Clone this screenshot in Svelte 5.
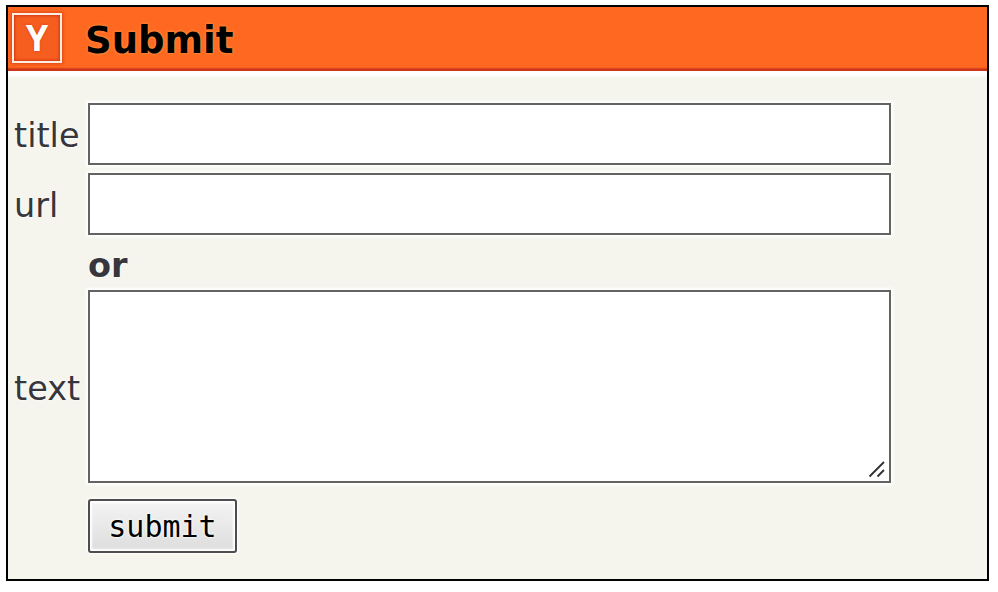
<script>
  let title = $state('');
  let url = $state('');
  let text = $state('');
</script>

<main>
  <header>
    <div class="logo">Y</div>
    <h1>Submit</h1>
  </header>
  <form onsubmit={(e) => e.preventDefault()}>
    <div class="row field">
      <label for="title">title</label>
      <input id="title" bind:value={title} />
    </div>
    <div class="row field">
      <label for="url">url</label>
      <input id="url" bind:value={url} />
    </div>
    <div class="row or"><span></span><b>or</b></div>
    <div class="row area">
      <label for="text">text</label>
      <div class="box">
        <textarea id="text" bind:value={text}></textarea>
        <svg class="grip" width="18" height="17" viewBox="0 0 18 17">
          <path d="M1.5 15.5L16 1M9.5 15.5L16 9" stroke="#303030" stroke-width="1.8" fill="none" />
        </svg>
      </div>
    </div>
    <div class="row"><span></span><button>submit</button></div>
  </form>
</main>

<style>
  :global(body) { background: #fff; }
  main {
    box-sizing: border-box;
    width: 983px;
    height: 576px;
    margin: 5px 0 0 6px;
    border: 2px solid #000;
    background: #f5f5ed;
    font-family: "DejaVu Sans", Verdana, sans-serif;
    overflow: hidden;
  }
  header {
    box-sizing: border-box;
    height: 64px;
    display: flex;
    align-items: flex-start;
    padding: 6px 0 0 4px;
    background: linear-gradient(#ff6820 0 60px, #ef5820 61px, #c93418 62px, #cf3818 64px);
  }
  .logo {
    box-sizing: border-box;
    width: 50px;
    height: 50px;
    border: 2px solid #ffece2;
    box-shadow: inset 0 0 3px 1px #cf3c14, 0 0 3px 1px #dc4818;
    background: #f65e20;
    color: #fff;
    font: bold 36px/46px "Open Sans", sans-serif;
    text-align: center;
    text-shadow: 0 0 3px #d84010;
  }
  h1 {
    margin: 6px 0 0 23px;
    font-size: 37px;
    line-height: 44px;
    font-weight: bold;
    color: #000;
    text-shadow: 0 0 3px #ffa94f;
  }
  form {
    padding: 32px 0 0 6px;
    background: linear-gradient(#fff 0 4px, #f5f5ed 7px);
  }
  .row { display: flex; align-items: center; }
  .row > label, .row > span { flex: 0 0 74px; }
  label, b {
    color: #36363c;
    font-size: 33.5px;
    line-height: 40px;
    text-shadow: 0 0 3px #fff, 0 0 2px #fff;
  }
  label { position: relative; top: 2px; }
  .field { height: 62px; margin-bottom: 8px; }
  input, textarea {
    box-sizing: border-box;
    display: block;
    width: 803px;
    height: 62px;
    margin: 0;
    padding: 8px;
    border: 2px solid #636363;
    border-radius: 0;
    outline: none;
    background: #fff;
    box-shadow: 0 0 3px 2px #fff;
    font: 30px "DejaVu Sans Mono", monospace;
  }
  .or { height: 47px; }
  b { padding-bottom: 2px; }
  .box { position: relative; }
  textarea { height: 193px; resize: none; }
  .grip { position: absolute; right: 5px; bottom: 5px; }
  .area { margin-bottom: 16px; }
  button {
    box-sizing: border-box;
    width: 149px;
    height: 54px;
    padding: 1px 0 0;
    border: 2px solid #4d4d4f;
    border-radius: 3px;
    background: linear-gradient(#f4f4f4, #dddddd);
    box-shadow: inset 0 0 2px 2px #fff, 0 0 3px 1px #fff;
    color: #000;
    font: 30px "DejaVu Sans Mono", monospace;
    text-shadow: 0 0 3px #fff, 0 0 2px #fff;
  }
</style>
